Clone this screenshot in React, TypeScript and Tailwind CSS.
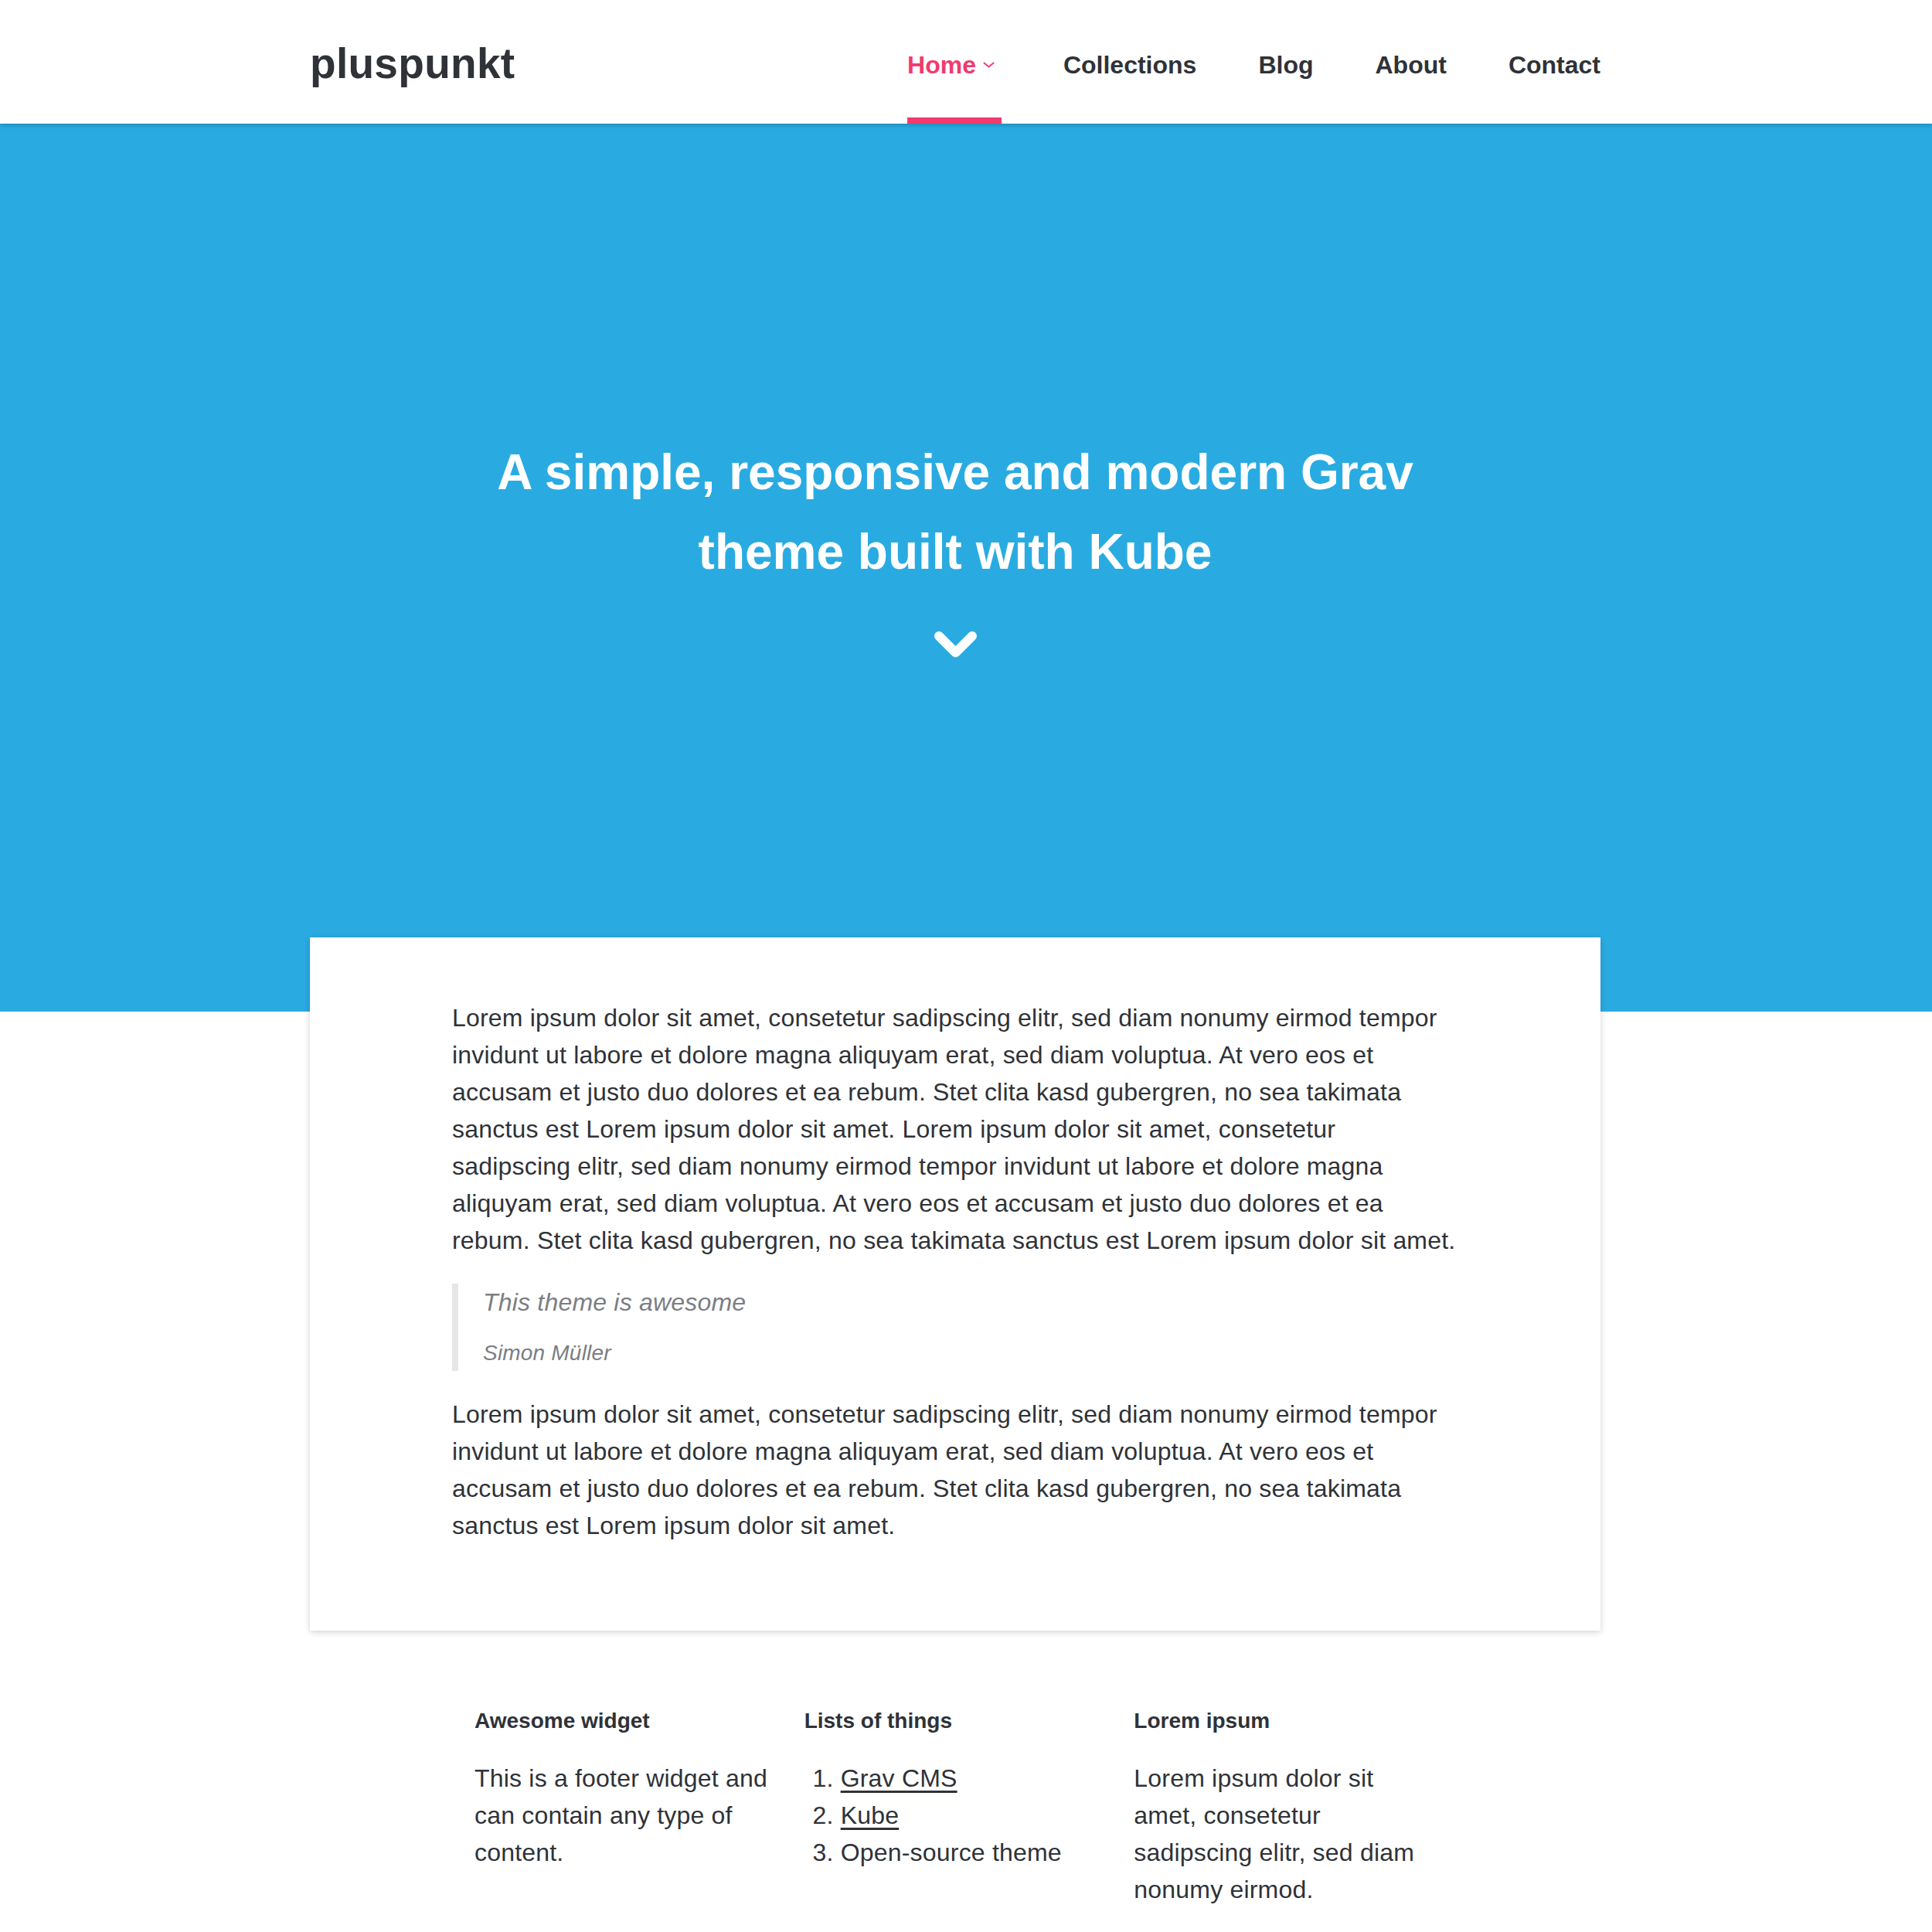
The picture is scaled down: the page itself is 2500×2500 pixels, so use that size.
import React from "react";

const navItems = ["Collections", "Blog", "About", "Contact"];

const lorem =
  "Lorem ipsum dolor sit amet, consetetur sadipscing elitr, sed diam nonumy eirmod tempor invidunt ut labore et dolore magna aliquyam erat, sed diam voluptua. At vero eos et accusam et justo duo dolores et ea rebum. Stet clita kasd gubergren, no sea takimata sanctus est Lorem ipsum dolor sit amet.";

const App = () => {
  return (
    <div className="min-h-[2500px] bg-white font-['Liberation_Sans',Arial,sans-serif] text-[#2f3237]">
      <header className="relative z-10 bg-white pr-[28px] shadow-[0_2px_6px_rgba(0,0,0,0.22)]">
        <div className="mx-auto flex h-[160px] w-[1670px] items-center justify-between">
          <a className="pt-[4px] text-[55px] font-bold tracking-[0.3px]">pluspunkt</a>
          <nav>
            <ul className="flex h-[160px] items-stretch gap-[80px] text-[32px] font-bold">
              <li className="flex items-center gap-[9px] border-b-[8px] border-[#f13a6e] pr-[9px] pt-[15px] text-[#f13a6e]">
                <span>Home</span>
                <svg width="15" height="8" viewBox="0 0 15 8" fill="none">
                  <polyline
                    points="1.5,1.5 7.5,6.5 13.5,1.5"
                    stroke="#f13a6e"
                    strokeWidth="2"
                    strokeLinecap="round"
                    strokeLinejoin="round"
                  />
                </svg>
              </li>
              {navItems.map((item) => (
                <li
                  key={item}
                  className="flex items-center border-b-[8px] border-transparent pt-[15px]"
                >
                  {item}
                </li>
              ))}
            </ul>
          </nav>
        </div>
      </header>

      <section className="bg-[#29abe2] pb-[456px] pr-[28px] pt-[400px]">
        <div className="mx-auto flex w-[1670px] flex-col items-center">
          <h1 className="max-w-[1260px] text-center text-[64px] font-bold leading-[103px] text-white">
            A simple, responsive and modern Grav theme built with Kube
          </h1>
          <svg className="mt-[50px]" width="57" height="37" viewBox="0 0 57 37" fill="none">
            <polyline
              points="7,7 28.5,28.5 50,7"
              stroke="white"
              strokeWidth="12"
              strokeLinecap="round"
              strokeLinejoin="round"
            />
          </svg>
        </div>
      </section>

      <div className="pr-[28px]">
        <main className="relative mx-auto -mt-[96px] w-[1670px] bg-white px-[184px] pb-[80px] pt-[80px] text-[32px] leading-[48px] tracking-[0.2px] shadow-[0_2px_8px_rgba(0,0,0,0.18)]">
          <p className="mb-[32px]">
            {lorem} Lorem ipsum dolor sit amet, consetetur sadipscing elitr, sed diam nonumy eirmod
            tempor invidunt ut labore et dolore magna aliquyam erat, sed diam voluptua. At vero eos et
            accusam et justo duo dolores et ea rebum. Stet clita kasd gubergren, no sea takimata sanctus
            est Lorem ipsum dolor sit amet.
          </p>
          <blockquote className="mb-[32px] border-l-[8px] border-[#e6e6e6] pb-[3px] pl-[32px] italic text-[#7b7e83]">
            <p>This theme is awesome</p>
            <cite className="mt-[22px] block text-[28px] leading-[40px]">Simon Müller</cite>
          </blockquote>
          <p className="mb-[32px]">{lorem}</p>
        </main>
      </div>

      <footer className="pr-[28px] pt-[97px]">
        <div className="mx-auto grid w-[1244px] grid-cols-3 gap-x-[36px] text-[32px] leading-[48px] tracking-[0.2px]">
          <div>
            <h4 className="mb-[30px] text-[28px] font-bold leading-[40px] tracking-normal">Awesome widget</h4>
            <p>This is a footer widget and can contain any type of content.</p>
          </div>
          <div>
            <h4 className="mb-[30px] text-[28px] font-bold leading-[40px] tracking-normal">Lists of things</h4>
            <ol className="list-outside list-decimal pl-[47px]">
              <li>
                <a className="underline underline-offset-[5px]">Grav CMS</a>
              </li>
              <li>
                <a className="underline underline-offset-[5px]">Kube</a>
              </li>
              <li>Open-source theme</li>
            </ol>
          </div>
          <div>
            <h4 className="mb-[30px] text-[28px] font-bold leading-[40px] tracking-normal">Lorem ipsum</h4>
            <p>Lorem ipsum dolor sit amet, consetetur sadipscing elitr, sed diam nonumy eirmod.</p>
          </div>
        </div>
      </footer>
    </div>
  );
};

export default App;
